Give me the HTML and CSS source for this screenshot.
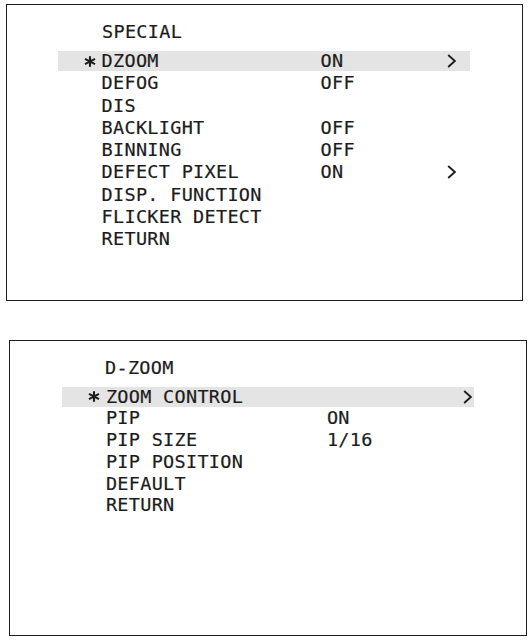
FILE: index.html
```html
<!DOCTYPE html>
<html lang="en">
<head>
<meta charset="utf-8">
<title>OSD menus</title>
<link rel="stylesheet" href="styles.css">
</head>
<body>
<section class="menu menu--special">
  <h2 class="menu-title">SPECIAL</h2>
  <ul class="menu-list">
    <li class="item is-selected">
      <span class="mark"><svg viewBox="0 0 12 11" width="12" height="11"><path d="M6 0.2V10.8M1 2.8L11 8.2M1 8.2L11 2.8"/></svg></span>
      <span class="label">DZOOM</span><span class="value">ON</span>
      <span class="arrow"><svg viewBox="0 0 9 14" width="9" height="14"><path d="M1.2 1L7.8 7L1.2 13"/></svg></span>
    </li>
    <li class="item"><span class="mark"></span><span class="label">DEFOG</span><span class="value">OFF</span><span class="arrow"></span></li>
    <li class="item"><span class="mark"></span><span class="label">DIS</span><span class="value"></span><span class="arrow"></span></li>
    <li class="item"><span class="mark"></span><span class="label">BACKLIGHT</span><span class="value">OFF</span><span class="arrow"></span></li>
    <li class="item"><span class="mark"></span><span class="label">BINNING</span><span class="value">OFF</span><span class="arrow"></span></li>
    <li class="item"><span class="mark"></span><span class="label">DEFECT PIXEL</span><span class="value">ON</span>
      <span class="arrow"><svg viewBox="0 0 9 14" width="9" height="14"><path d="M1.2 1L7.8 7L1.2 13"/></svg></span></li>
    <li class="item"><span class="mark"></span><span class="label">DISP. FUNCTION</span><span class="value"></span><span class="arrow"></span></li>
    <li class="item"><span class="mark"></span><span class="label">FLICKER DETECT</span><span class="value"></span><span class="arrow"></span></li>
    <li class="item"><span class="mark"></span><span class="label">RETURN</span><span class="value"></span><span class="arrow"></span></li>
  </ul>
</section>

<section class="menu menu--dzoom">
  <h2 class="menu-title">D-ZOOM</h2>
  <ul class="menu-list">
    <li class="item is-selected">
      <span class="mark"><svg viewBox="0 0 12 11" width="12" height="11"><path d="M6 0.2V10.8M1 2.8L11 8.2M1 8.2L11 2.8"/></svg></span>
      <span class="label">ZOOM CONTROL</span><span class="value"></span>
      <span class="arrow"><svg viewBox="0 0 9 14" width="9" height="14"><path d="M1.2 1L7.8 7L1.2 13"/></svg></span>
    </li>
    <li class="item"><span class="mark"></span><span class="label">PIP</span><span class="value">ON</span><span class="arrow"></span></li>
    <li class="item"><span class="mark"></span><span class="label">PIP SIZE</span><span class="value">1/16</span><span class="arrow"></span></li>
    <li class="item"><span class="mark"></span><span class="label">PIP POSITION</span><span class="value"></span><span class="arrow"></span></li>
    <li class="item"><span class="mark"></span><span class="label">DEFAULT</span><span class="value"></span><span class="arrow"></span></li>
    <li class="item"><span class="mark"></span><span class="label">RETURN</span><span class="value"></span><span class="arrow"></span></li>
  </ul>
</section>
</body>
</html>
```

FILE: styles.css
```css
html, body {
  margin: 0;
  padding: 0;
  background: #ffffff;
}

body {
  font-family: "DejaVu Sans Mono", "Liberation Mono", monospace;
  font-size: 18.5px;
  letter-spacing: 0.3px;
  color: #1c1c1c;
  -webkit-text-stroke: 0.2px #1c1c1c;
}

.menu {
  box-sizing: border-box;
  border: 1px solid #1e1e1e;
  --label-col: 219px;
  --arrow-pad: 14px;
  --row-gap: 2.25px;
  --list-left: 50.6px;
  --list-top: 9.5px;
}

.menu--special {
  margin: 4px 0 0 6px;
  width: 517px;
  height: 297px;
}

.menu--dzoom {
  margin: 39px 0 0 9px;
  width: 518px;
  height: 296px;
  --label-col: 221px;
  --arrow-pad: 2px;
  --row-gap: 1.8px;
  --list-left: 51.9px;
  --list-top: 9px;
}

.menu-title {
  margin: 16.5px 0 0 95px;
  font-size: inherit;
  font-weight: normal;
  line-height: 20px;
  height: 20px;
}

.menu-list {
  list-style: none;
  margin: var(--list-top) 0 0 var(--list-left);
  padding: 0;
  width: 412px;
  display: flex;
  flex-direction: column;
  gap: var(--row-gap);
}

.item {
  display: grid;
  grid-template-columns: 44px var(--label-col) 1fr 9px;
  align-items: center;
  height: 20px;
  line-height: 20px;
  padding-right: var(--arrow-pad);
  white-space: pre;
}

.item.is-selected {
  background: #e4e4e4;
}

.mark {
  display: flex;
  align-items: center;
  height: 20px;
  padding-left: 26px;
}

.mark svg {
  display: block;
  fill: none;
  stroke: #1c1c1c;
  stroke-width: 2.1;
}

.arrow {
  display: flex;
  align-items: center;
  height: 20px;
}

.arrow svg {
  display: block;
  fill: none;
  stroke: #1c1c1c;
  stroke-width: 1.8;
  stroke-linejoin: miter;
}
```
